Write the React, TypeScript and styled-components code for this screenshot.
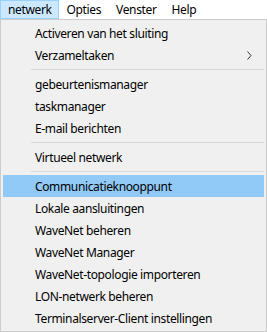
import React from "react";
import styled, { createGlobalStyle } from "styled-components";

type Entry = { label: string; submenu?: boolean; active?: boolean } | "sep";

const entries: Entry[] = [
  { label: "Activeren van het sluiting" },
  { label: "Verzameltaken", submenu: true },
  "sep",
  { label: "gebeurtenismanager" },
  { label: "taskmanager" },
  { label: "E-mail berichten" },
  "sep",
  { label: "Virtueel netwerk" },
  "sep",
  { label: "Communicatieknooppunt", active: true },
  { label: "Lokale aansluitingen" },
  { label: "WaveNet beheren" },
  { label: "WaveNet Manager" },
  { label: "WaveNet-topologie importeren" },
  { label: "LON-netwerk beheren" },
  { label: "Terminalserver-Client instellingen" },
];

const topItems = ["netwerk", "Opties", "Venster", "Help"];

function App() {
  return (
    <>
      <GlobalStyle />
      <Window>
        <MenuBar>
          {topItems.map((item, i) => (
            <TopItem key={item} $open={i === 0}>
              {item}
            </TopItem>
          ))}
        </MenuBar>
        <Dropdown>
          {entries.map((entry, i) =>
            entry === "sep" ? (
              <Separator key={i} />
            ) : (
              <Item key={i} $active={entry.active}>
                <Label>{entry.label}</Label>
                {entry.submenu && (
                  <Chevron width="5" height="9" viewBox="0 0 5 9">
                    <path d="M0.5 0.5 L4 4.5 L0.5 8.5" fill="none" stroke="#333" strokeWidth="1" />
                  </Chevron>
                )}
              </Item>
            )
          )}
        </Dropdown>
      </Window>
    </>
  );
}

export default App;

const GlobalStyle = createGlobalStyle`
  body {
    margin: 0;
    background: #ffffff;
    font-family: "Noto Sans", "Open Sans", sans-serif;
    font-size: 12px;
    letter-spacing: -0.36px;
    color: #000;
  }
`;

const Window = styled.div`
  width: 267px;
  height: 332px;
  display: flex;
  flex-direction: column;
  overflow: hidden;
`;

const MenuBar = styled.div`
  display: flex;
  height: 19px;
  background: #ffffff;
`;

const TopItem = styled.div<{ $open?: boolean }>`
  display: flex;
  align-items: center;
  height: 19px;
  box-sizing: border-box;
  padding: 0 6px 0 7px;
  border: 1px solid ${(p) => (p.$open ? "#99d1ff" : "transparent")};
  background: ${(p) => (p.$open ? "#cce8ff" : "transparent")};
`;

const Dropdown = styled.div`
  display: flex;
  flex-direction: column;
  box-sizing: border-box;
  width: 267px;
  height: 313px;
  padding: 2px;
  background: #f0f0f0;
  border: 1px solid #cccccc;
`;

const Item = styled.div<{ $active?: boolean }>`
  display: flex;
  align-items: center;
  height: 22px;
  flex-shrink: 0;
  padding: 0 12px 0 32px;
  background: ${(p) => (p.$active ? "#91c9f7" : "transparent")};
`;

const Label = styled.span`
  flex: 1;
  white-space: nowrap;
`;

const Chevron = styled.svg`
  display: block;
`;

const Separator = styled.div`
  height: 7px;
  flex-shrink: 0;
  margin-left: 28px;
  &::after {
    content: "";
    display: block;
    margin-top: 3px;
    height: 1px;
    background: #d7d7d7;
  }
`;
